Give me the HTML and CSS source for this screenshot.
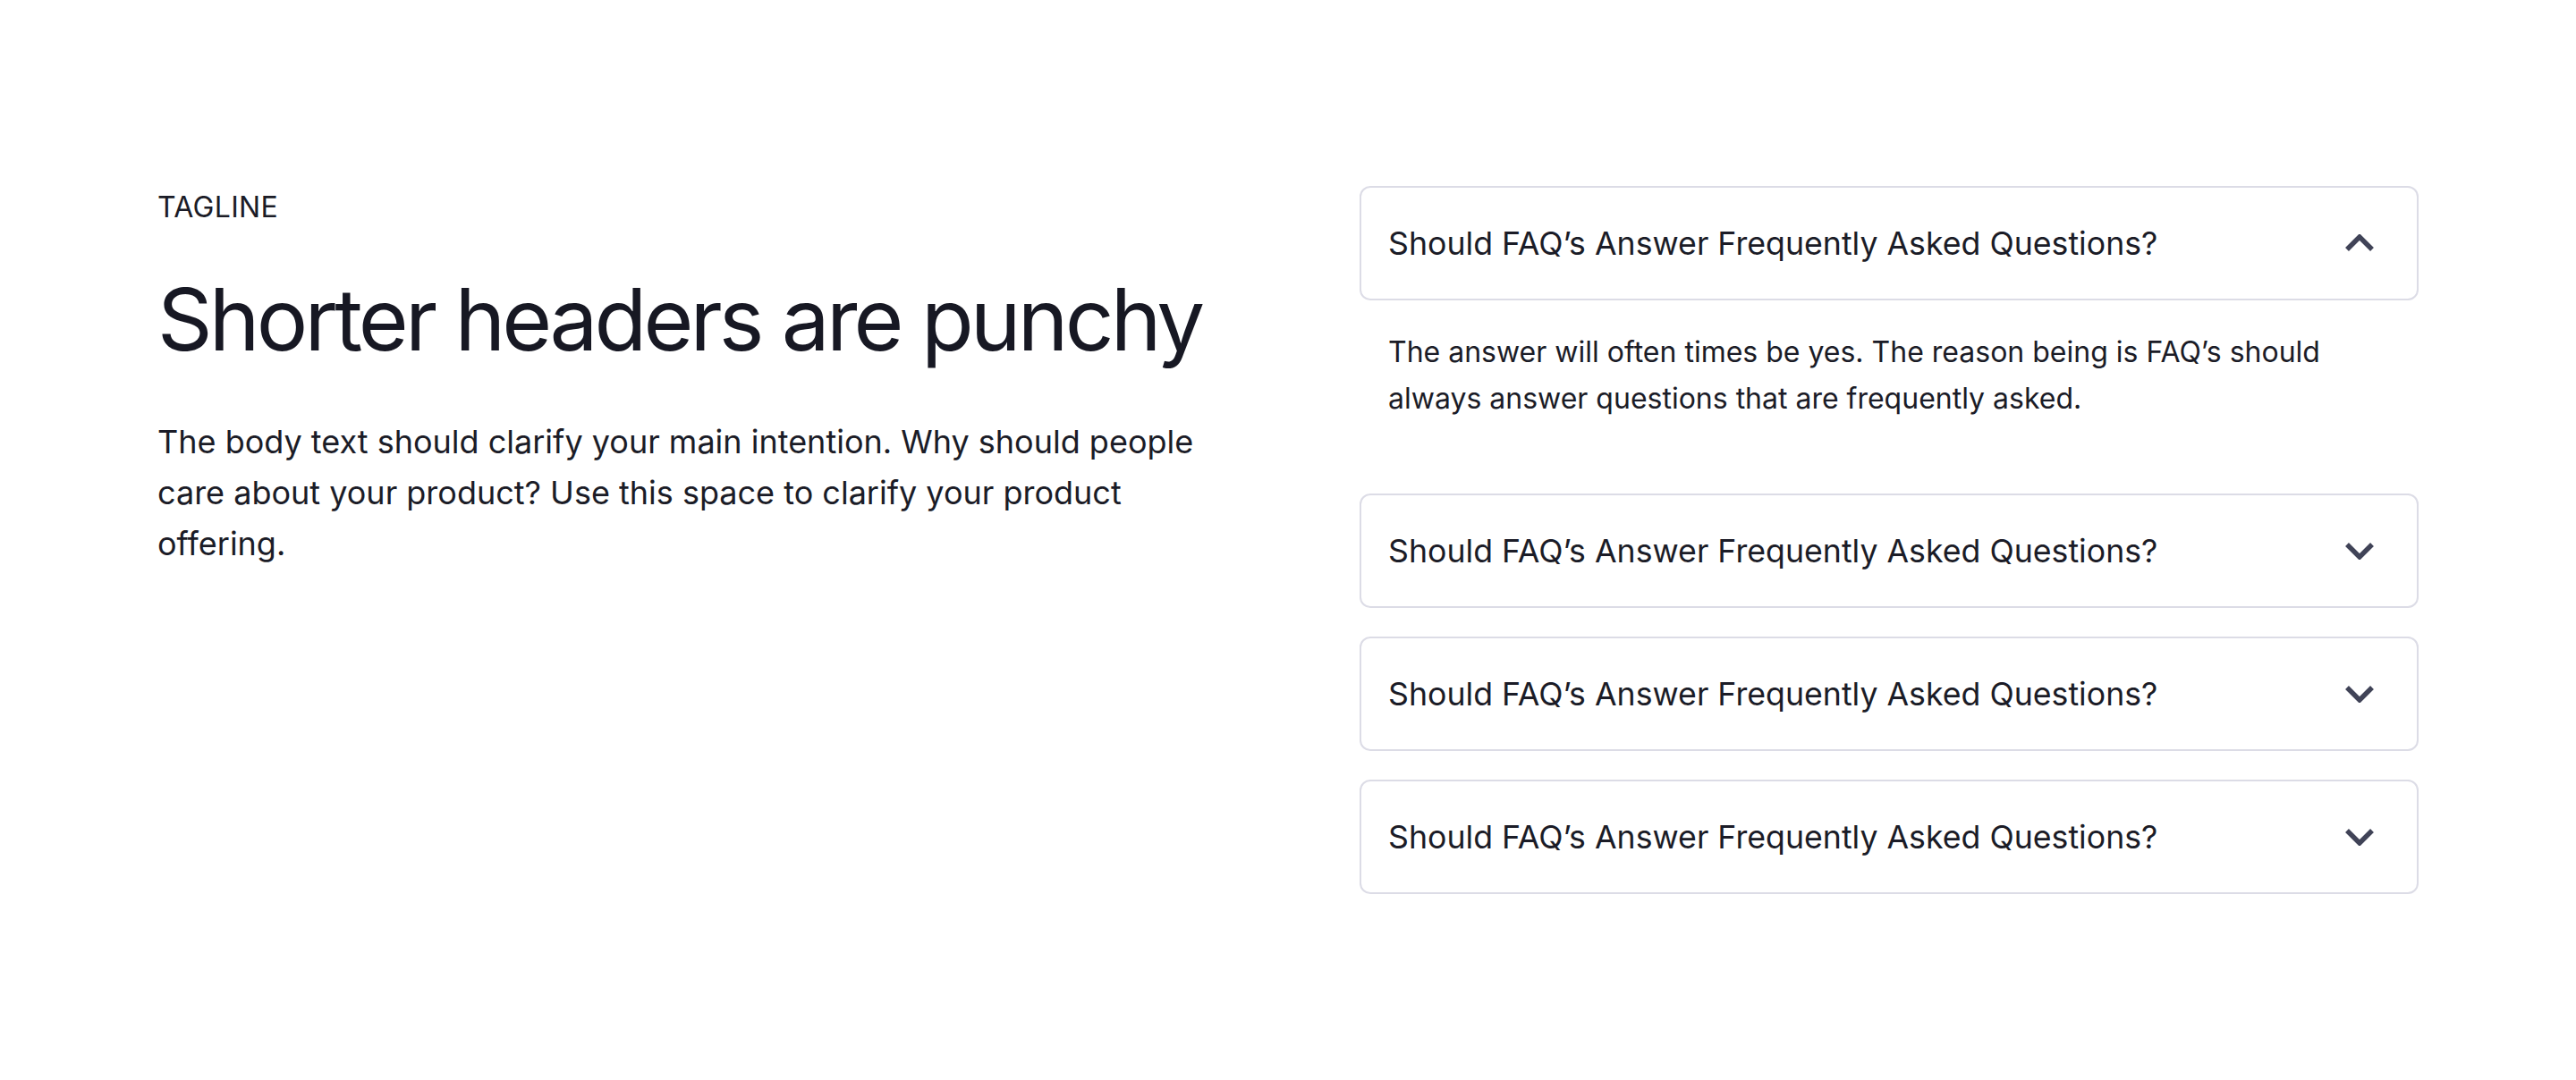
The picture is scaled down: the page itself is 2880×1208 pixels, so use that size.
FILE: index.html
```html
<!DOCTYPE html>
<html lang="en">
<head>
<meta charset="utf-8">
<title>FAQ</title>
<link rel="stylesheet" href="styles.css">
</head>
<body>
<section class="faq">
  <div class="intro">
    <p class="tagline">TAGLINE</p>
    <h1 class="title">Shorter headers are punchy</h1>
    <p class="lead">The body text should clarify your main intention. Why should people care about your product? Use this space to clarify your product offering.</p>
  </div>
  <div class="accordion">
    <div class="item open">
      <div class="question">
        <span>Should FAQ’s Answer Frequently Asked Questions?</span>
        <svg class="chevron" viewBox="0 0 32 20" width="32" height="20" aria-hidden="true"><polyline points="2,17 16,3 30,17"/></svg>
      </div>
      <div class="answer">The answer will often times be yes. The reason being is FAQ’s should always answer questions that are frequently asked.</div>
    </div>
    <div class="item">
      <div class="question">
        <span>Should FAQ’s Answer Frequently Asked Questions?</span>
        <svg class="chevron" viewBox="0 0 32 20" width="32" height="20" aria-hidden="true"><polyline points="2,3 16,17 30,3"/></svg>
      </div>
    </div>
    <div class="item">
      <div class="question">
        <span>Should FAQ’s Answer Frequently Asked Questions?</span>
        <svg class="chevron" viewBox="0 0 32 20" width="32" height="20" aria-hidden="true"><polyline points="2,3 16,17 30,3"/></svg>
      </div>
    </div>
    <div class="item">
      <div class="question">
        <span>Should FAQ’s Answer Frequently Asked Questions?</span>
        <svg class="chevron" viewBox="0 0 32 20" width="32" height="20" aria-hidden="true"><polyline points="2,3 16,17 30,3"/></svg>
      </div>
    </div>
  </div>
</section>
</body>
</html>
```

FILE: styles.css
```css
* { box-sizing: border-box; }

html, body {
  margin: 0;
  background: #ffffff;
}

body {
  font-family: Inter, "Noto Sans", "Liberation Sans", sans-serif;
  color: #1b1c27;
}

.faq {
  display: grid;
  grid-template-columns: minmax(0, 1fr) minmax(0, 1fr);
  column-gap: 160px;
  padding: 208px 176px;
  align-items: start;
}

.tagline {
  margin: 0;
  font-size: 32px;
  line-height: 48px;
  letter-spacing: 0.01em;
}

.title {
  margin: 44px 0 0;
  font-size: 96px;
  line-height: 115px;
  font-weight: 400;
  letter-spacing: -0.04em;
  white-space: nowrap;
  color: #171823;
}

.lead {
  margin: 51px 0 0;
  font-size: 36px;
  line-height: 57px;
}

.accordion {
  display: flex;
  flex-direction: column;
  gap: 32px;
}

.question {
  display: flex;
  align-items: center;
  justify-content: space-between;
  height: 128px;
  padding: 0 32px 0 30px;
  border: 2px solid #dcdce6;
  border-radius: 12px;
  font-size: 35.7px;
  line-height: 54px;
}

.chevron {
  width: 32px;
  height: 20px;
  margin-right: 16px;
  flex: none;
}

.chevron polyline {
  fill: none;
  stroke: #404357;
  stroke-width: 5.5;
  stroke-linejoin: miter;
  stroke-linecap: butt;
}

.answer {
  padding: 32px 80px 48px 32px;
  font-size: 32px;
  line-height: 52px;
}
```
